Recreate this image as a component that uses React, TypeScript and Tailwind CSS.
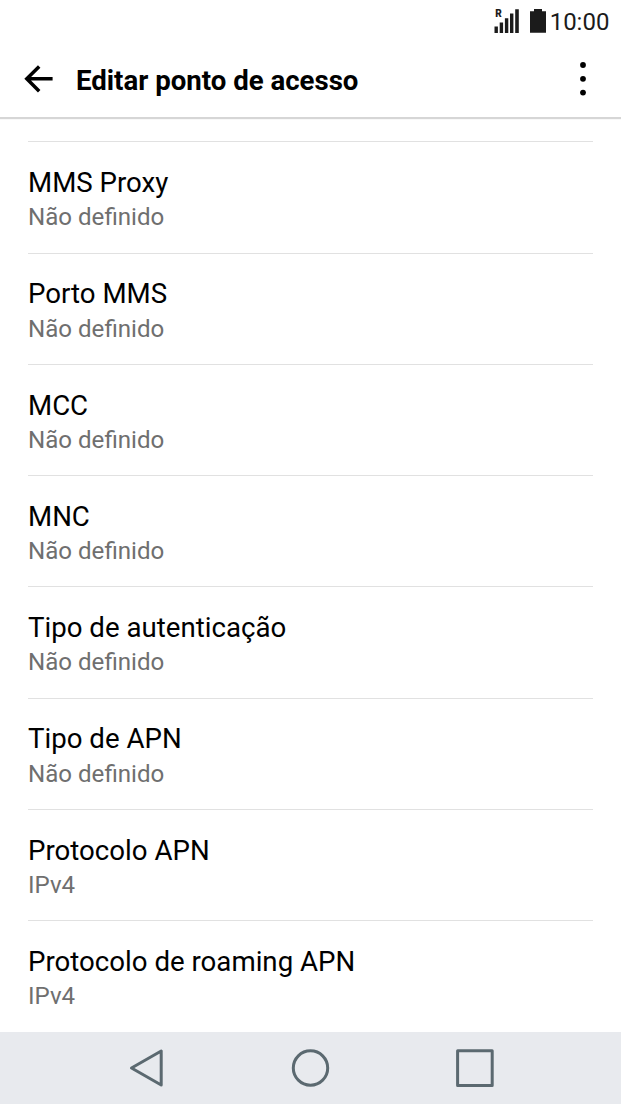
const settings = [
  { title: 'MMS Proxy', value: 'Não definido' },
  { title: 'Porto MMS', value: 'Não definido' },
  { title: 'MCC', value: 'Não definido' },
  { title: 'MNC', value: 'Não definido' },
  { title: 'Tipo de autenticação', value: 'Não definido' },
  { title: 'Tipo de APN', value: 'Não definido' },
  { title: 'Protocolo APN', value: 'IPv4' },
  { title: 'Protocolo de roaming APN', value: 'IPv4' },
];

function StatusBar() {
  return (
    <div className="flex h-[42px] shrink-0 items-center justify-end pr-[11.6px] text-[#1b1b1b]">
      <svg width="26" height="26" viewBox="0 0 26 26" fill="currentColor" className="mr-[10px]">
        <text x="1.2" y="9.2" fontSize="10" fontWeight="900" className="font-['Roboto']">R</text>
        <path d="M0.5 18.5h3.4V25H0.5zM5.7 14.5h3.4V25H5.7zM10.9 10.3h3.4V25h-3.4zM16 5.5h3.4V25H16zM21.2 1.2h3.6V25h-3.6z" />
      </svg>
      <svg width="16" height="24" viewBox="0 0 16 24" fill="currentColor" className="mr-[3.6px]">
        <path d="M4 0h8v2.3h4v21.4H0V2.3h4z" />
      </svg>
      <span className="pt-px text-[24px] leading-[42px]">10:00</span>
    </div>
  );
}

function AppBar() {
  return (
    <header className="flex h-[76px] shrink-0 items-center border-b border-[#d6d6d6] bg-white pl-6 shadow-[0_1px_1px_rgba(0,0,0,0.16)]">
      <svg width="29" height="28" viewBox="0 0 29 28" fill="none" stroke="#000" strokeWidth="3.5" className="mb-0.5">
        <path d="M28.6 13.8H2.6M15.2 1.5L2.8 13.8l12.4 12.4" />
      </svg>
      <h1 className="ml-[23px] pt-0.5 text-[27.6px] font-bold leading-9">Editar ponto de acesso</h1>
      <svg width="6" height="34" viewBox="0 0 6 34" className="mb-px mr-[35px] ml-auto">
        <circle cx="3" cy="3" r="2.9" />
        <circle cx="3" cy="16.8" r="2.9" />
        <circle cx="3" cy="30.6" r="2.9" />
      </svg>
    </header>
  );
}

function NavBar() {
  return (
    <nav className="flex h-[72px] shrink-0 items-center bg-[#e8eaee] pl-[129px]">
      <svg width="366" height="40" viewBox="0 0 366 40" fill="none" stroke="#5b6970" strokeWidth="3" strokeLinejoin="round">
        <path d="M32.2 3v34L2.5 20z" />
        <circle cx="181.5" cy="20" r="17.2" />
        <path d="M328.6 2.8h34.6v34.6h-34.6z" />
      </svg>
    </nav>
  );
}

export default function App() {
  return (
    <div className="flex h-[1104px] w-full flex-col overflow-hidden bg-white font-['Roboto',sans-serif] text-black">
      <StatusBar />
      <AppBar />
      <main className="flex-1 px-7 pt-[23.4px]">
        {settings.map((item) => (
          <div key={item.title} className="h-[111.25px] border-t border-[#e1e1e1] pt-[22.7px]">
            <p className="text-[27.65px] leading-9">{item.title}</p>
            <p className="mt-[0.4px] text-[24.1px] leading-8 text-[#6f6f6f]">{item.value}</p>
          </div>
        ))}
      </main>
      <NavBar />
    </div>
  );
}
